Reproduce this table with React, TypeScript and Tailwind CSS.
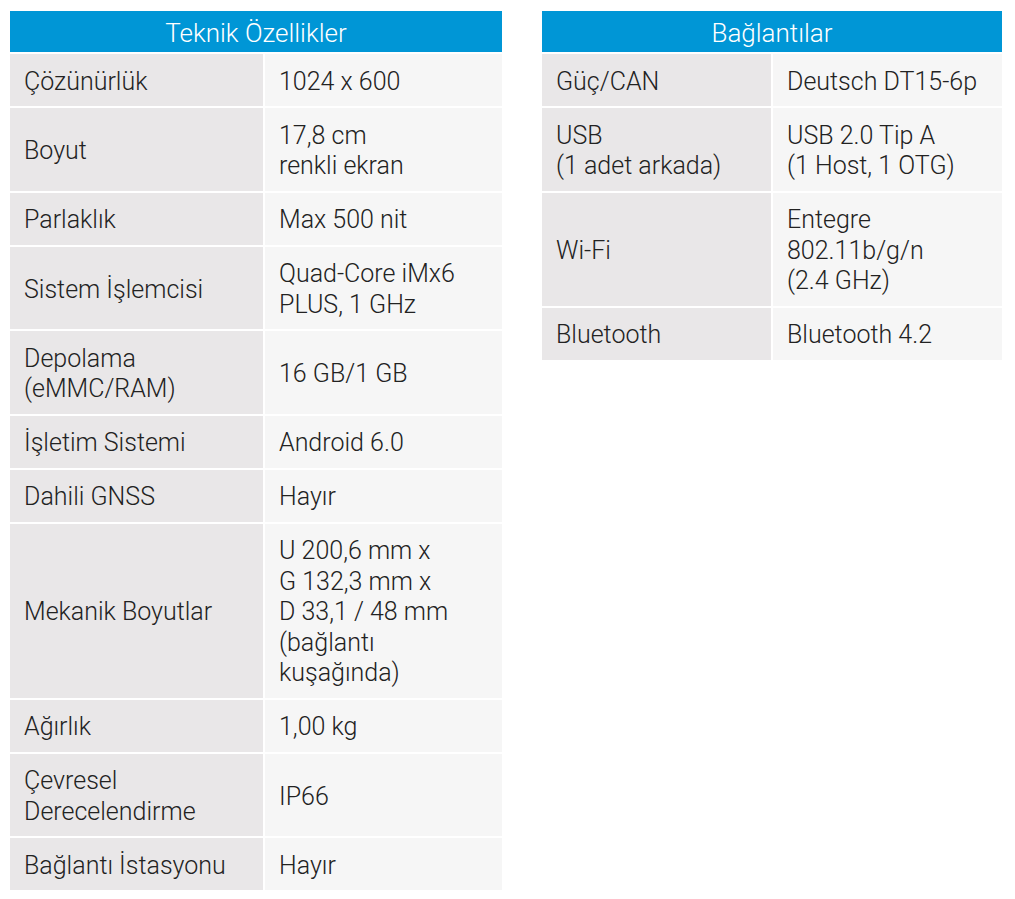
import React from "react";

type Row = { label: string[]; value: string[] };

const left: Row[] = [
  { label: ["Çözünürlük"], value: ["1024 x 600"] },
  { label: ["Boyut"], value: ["17,8 cm", "renkli ekran"] },
  { label: ["Parlaklık"], value: ["Max 500 nit"] },
  { label: ["Sistem İşlemcisi"], value: ["Quad-Core iMx6", "PLUS, 1 GHz"] },
  { label: ["Depolama", "(eMMC/RAM)"], value: ["16 GB/1 GB"] },
  { label: ["İşletim Sistemi"], value: ["Android 6.0"] },
  { label: ["Dahili GNSS"], value: ["Hayır"] },
  {
    label: ["Mekanik Boyutlar"],
    value: ["U 200,6 mm x", "G 132,3 mm x", "D 33,1 / 48 mm", "(bağlantı", "kuşağında)"],
  },
  { label: ["Ağırlık"], value: ["1,00 kg"] },
  { label: ["Çevresel", "Derecelendirme"], value: ["IP66"] },
  { label: ["Bağlantı İstasyonu"], value: ["Hayır"] },
];

const right: Row[] = [
  { label: ["Güç/CAN"], value: ["Deutsch DT15-6p"] },
  { label: ["USB", "(1 adet arkada)"], value: ["USB 2.0 Tip A", "(1 Host, 1 OTG)"] },
  { label: ["Wi-Fi"], value: ["Entegre", "802.11b/g/n", "(2.4 GHz)"] },
  { label: ["Bluetooth"], value: ["Bluetooth 4.2"] },
];

function Lines({ lines }: { lines: string[] }) {
  return (
    <div>
      {lines.map((l, i) => (
        <div key={i} className="whitespace-nowrap">{l}</div>
      ))}
    </div>
  );
}

function Table({
  title,
  rows,
  cols,
  width,
}: {
  title: string;
  rows: Row[];
  cols: string;
  width: string;
}) {
  return (
    <div className={`flex flex-col gap-[2px] ${width}`}>
      <div className="h-[41px] bg-[#0096d6] text-white flex items-center justify-center text-[26px] font-light pt-[3px]">
        {title}
      </div>
      {rows.map((r, i) => (
        <div key={i} className={`grid ${cols} gap-[2px]`}>
          <div className="bg-[#e9e7e8] px-[14px] pt-[12.75px] pb-[8.75px] flex items-center leading-[30.5px]">
            <Lines lines={r.label} />
          </div>
          <div className="bg-[#f6f6f6] px-[14px] pt-[12.75px] pb-[8.75px] flex items-center leading-[30.5px]">
            <Lines lines={r.value} />
          </div>
        </div>
      ))}
    </div>
  );
}

export default function App() {
  return (
    <div
      className="w-[1015px] h-[899px] bg-white flex items-start gap-[40px] pt-[11px] pl-[10px] text-[25px] font-light text-[#222]"
      style={{ fontFamily: "Roboto, 'Noto Sans', sans-serif" }}
    >
      <Table title="Teknik Özellikler" rows={left} cols="grid-cols-[253px_237px]" width="w-[492px]" />
      <Table title="Bağlantılar" rows={right} cols="grid-cols-[229px_229px]" width="w-[460px]" />
    </div>
  );
}
